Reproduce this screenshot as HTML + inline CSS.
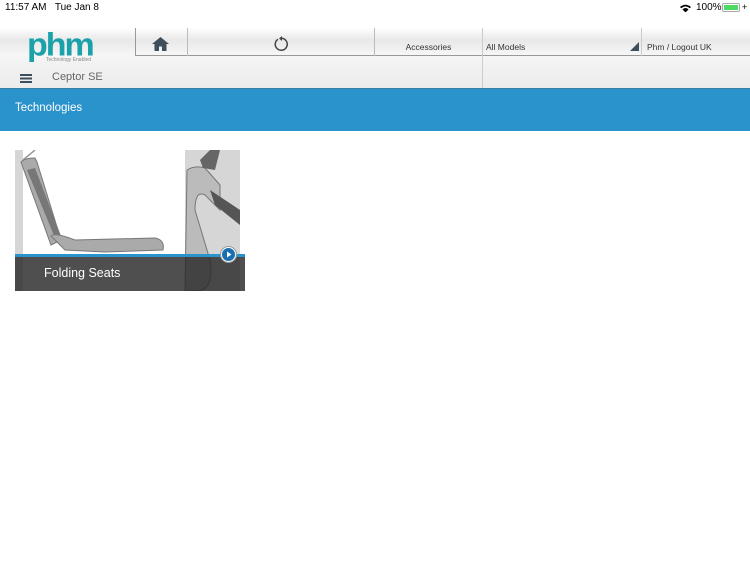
<!DOCTYPE html>
<html><head><style>
body{margin:0;width:750px;height:562px;background:#fff;font-family:"Liberation Sans",sans-serif;position:relative;overflow:hidden}
.a{position:absolute}
</style></head><body>
<div class="a" style="left:5px;top:2px;font-size:10px;color:#000">11:57 AM&nbsp;&nbsp;&nbsp;Tue Jan 8</div>
<svg class="a" style="left:680px;top:4px" width="11" height="8" viewBox="0 0 11 8"><path d="M0 3Q5.5-1.5 11 3L9.8 4.2Q5.5 .5 1.2 4.2Z M2.4 5.4Q5.5 2.6 8.6 5.4L5.5 8.5Z" fill="#000"/></svg>
<div class="a" style="left:696px;top:2px;font-size:10px;color:#000">100%</div>
<div class="a" style="left:722px;top:3px;width:16px;height:7px;border:1px solid #aaa;border-radius:2px"><div style="margin:1px;height:5px;background:#4cd964"></div></div>
<div class="a" style="left:742px;top:2px;font-size:9px">+</div>

<div class="a" style="left:0;top:28px;width:750px;height:60px;background:linear-gradient(#fff,#e8e8e8 20%,#f6f6f6 45%,#f2f2f2 60%,#ececec 100%)"></div>
<div class="a" style="left:27px;top:26px;font-size:34px;font-weight:bold;color:#1aa1a9;letter-spacing:-2px;transform:scaleY(0.95)">phm</div>
<div class="a" style="left:46px;top:57px;font-size:5px;color:#888">Technology Enabled</div>
<div class="a" style="left:135px;top:28px;width:615px;height:27px;border-bottom:1px solid #999"></div>
<div class="a" style="left:135px;top:28px;width:1px;height:28px;background:#999"></div>
<div class="a" style="left:187px;top:28px;width:1px;height:28px;background:#bbb"></div>
<div class="a" style="left:374px;top:28px;width:1px;height:28px;background:#bbb"></div>
<div class="a" style="left:482px;top:28px;width:1px;height:60px;background:#ccc"></div>
<div class="a" style="left:641px;top:28px;width:1px;height:28px;background:#ccc"></div>
<svg class="a" style="left:152px;top:37px" width="17" height="14" viewBox="0 0 17 14"><path d="M8.5 0L0 7h2.5v7h4.5V9.5h3V14h4.5V7H17z" fill="#3d4f5c"/></svg>
<svg class="a" style="left:273px;top:36px" width="16" height="16" viewBox="0 0 16 16"><path d="M5 3.2A6 6 0 1 0 9 2.3" fill="none" stroke="#444" stroke-width="1.5"/><path d="M9 0v5l-3-2.5z" fill="#444"/></svg>
<div class="a" style="left:375px;top:42px;width:107px;text-align:center;font-size:8.5px;color:#333">Accessories</div>
<div class="a" style="left:486px;top:42px;font-size:8.5px;color:#333">All Models</div>
<svg class="a" style="left:630px;top:42px" width="9" height="9"><path d="M9 0V9H0z" fill="#3d4f5c"/></svg>
<div class="a" style="left:647px;top:42px;font-size:8.5px;color:#333">Phm / Logout UK</div>
<div class="a" style="left:20px;top:74px;width:12px;height:2px;background:#3d4f5c;box-shadow:0 3.5px 0 #3d4f5c,0 7px 0 #3d4f5c"></div>
<div class="a" style="left:52px;top:71px;font-size:11px;color:#666">Ceptor SE</div>

<div class="a" style="left:0;top:88px;width:750px;height:43px;background:#2b93cb;border-top:1px solid #3a7fa8;box-sizing:border-box"></div>
<div class="a" style="left:15px;top:102px;font-size:11.5px;color:#fff">Technologies</div>

<div class="a" style="left:15px;top:150px;width:230px;height:141px;background:#fff;overflow:hidden">
<svg width="230" height="141" viewBox="0 0 230 141">
<rect x="0" y="0" width="8" height="141" fill="#d6d6d6"/>
<rect x="170" y="0" width="55" height="141" fill="#d6d6d6"/>
<path d="M8 10L20 0" stroke="#999" stroke-width="1.5"/>
<path d="M6 12Q10 8 20 8L22 12 L46 90L36 95Z" fill="#aaa" stroke="#777"/>
<path d="M12 20L40 88L46 86L20 18Z" fill="#777"/>
<path d="M36 86Q40 82 60 90L140 88Q150 90 148 100L90 102L50 100Z" fill="#aaa" stroke="#777"/>
<path d="M172 20Q180 15 190 18L205 35V60L190 45Q180 40 180 60L195 110Q200 141 180 141L170 141Z" fill="#bbb" stroke="#777"/>
<path d="M185 10L195 0H205L200 20L188 18Z" fill="#666"/>
<path d="M195 40L225 60V75L200 55Z" fill="#555"/>
</svg>
<div class="a" style="left:0;top:104px;width:230px;height:37px;background:rgba(40,40,40,.82);border-top:3px solid #2b93cb"></div>
<div class="a" style="left:29px;top:116px;font-size:12.5px;color:#fff">Folding Seats</div>
<div class="a" style="left:205px;top:96px;width:17px;height:17px;border-radius:50%;background:#fff;border:1px solid #999;box-sizing:border-box"></div>
<svg class="a" style="left:207px;top:98px" width="13" height="13"><circle cx="6.5" cy="6.5" r="6.5" fill="#1a6fb0"/><path d="M5 3.5L9.5 6.5L5 9.5Z" fill="#fff"/></svg>
</div>
</body></html>
